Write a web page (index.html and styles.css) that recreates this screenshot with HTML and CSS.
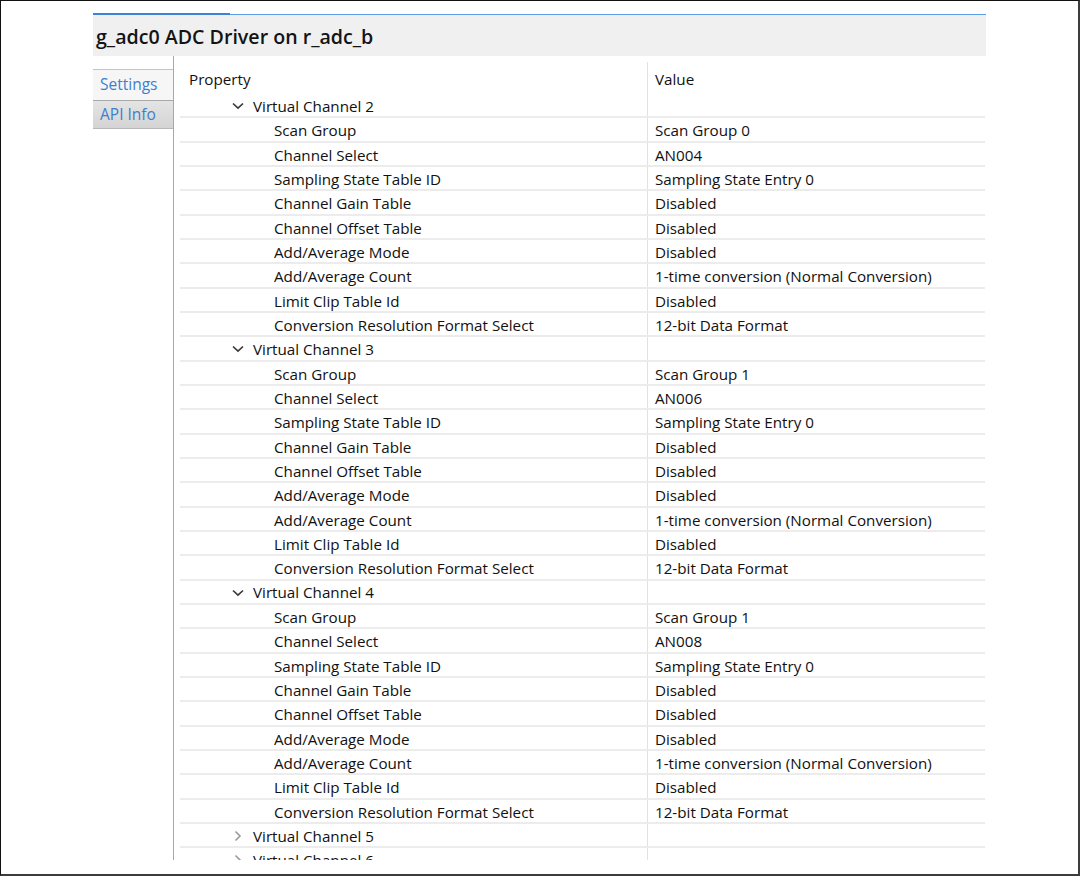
FILE: index.html
```html
<!DOCTYPE html>
<html>
<head>
<meta charset="utf-8">
<link rel="stylesheet" href="styles.css">
</head>
<body>
<div class="frame">
  <div class="editor">
    <div class="tabline"><div class="tabline-active"></div><div class="tabline-rest"></div></div>
    <div class="header"><span class="title">g_adc0 ADC Driver on r_adc_b</span></div>
    <div class="body">
      <div class="tabs">
        <div class="tab tab-selected">Settings</div>
        <div class="tab tab-other">API Info</div>
      </div>
      <div class="table-area">
        <div class="row head"><div class="prop">Property</div><div class="val">Value</div></div>

        <div class="row group"><div class="prop"><svg class="chev" width="12" height="8" viewBox="0 0 12 8"><path d="M1 1.5 L6 6.2 L11 1.5" fill="none" stroke="#3a3a3a" stroke-width="1.7"/></svg>Virtual Channel 2</div><div class="val"></div></div>
        <div class="row"><div class="prop child">Scan Group</div><div class="val">Scan Group 0</div></div>
        <div class="row"><div class="prop child">Channel Select</div><div class="val">AN004</div></div>
        <div class="row"><div class="prop child">Sampling State Table ID</div><div class="val">Sampling State Entry 0</div></div>
        <div class="row"><div class="prop child">Channel Gain Table</div><div class="val">Disabled</div></div>
        <div class="row"><div class="prop child">Channel Offset Table</div><div class="val">Disabled</div></div>
        <div class="row"><div class="prop child">Add/Average Mode</div><div class="val">Disabled</div></div>
        <div class="row"><div class="prop child">Add/Average Count</div><div class="val">1-time conversion (Normal Conversion)</div></div>
        <div class="row"><div class="prop child">Limit Clip Table Id</div><div class="val">Disabled</div></div>
        <div class="row"><div class="prop child">Conversion Resolution Format Select</div><div class="val">12-bit Data Format</div></div>

        <div class="row group"><div class="prop"><svg class="chev" width="12" height="8" viewBox="0 0 12 8"><path d="M1 1.5 L6 6.2 L11 1.5" fill="none" stroke="#3a3a3a" stroke-width="1.7"/></svg>Virtual Channel 3</div><div class="val"></div></div>
        <div class="row"><div class="prop child">Scan Group</div><div class="val">Scan Group 1</div></div>
        <div class="row"><div class="prop child">Channel Select</div><div class="val">AN006</div></div>
        <div class="row"><div class="prop child">Sampling State Table ID</div><div class="val">Sampling State Entry 0</div></div>
        <div class="row"><div class="prop child">Channel Gain Table</div><div class="val">Disabled</div></div>
        <div class="row"><div class="prop child">Channel Offset Table</div><div class="val">Disabled</div></div>
        <div class="row"><div class="prop child">Add/Average Mode</div><div class="val">Disabled</div></div>
        <div class="row"><div class="prop child">Add/Average Count</div><div class="val">1-time conversion (Normal Conversion)</div></div>
        <div class="row"><div class="prop child">Limit Clip Table Id</div><div class="val">Disabled</div></div>
        <div class="row"><div class="prop child">Conversion Resolution Format Select</div><div class="val">12-bit Data Format</div></div>

        <div class="row group"><div class="prop"><svg class="chev" width="12" height="8" viewBox="0 0 12 8"><path d="M1 1.5 L6 6.2 L11 1.5" fill="none" stroke="#3a3a3a" stroke-width="1.7"/></svg>Virtual Channel 4</div><div class="val"></div></div>
        <div class="row"><div class="prop child">Scan Group</div><div class="val">Scan Group 1</div></div>
        <div class="row"><div class="prop child">Channel Select</div><div class="val">AN008</div></div>
        <div class="row"><div class="prop child">Sampling State Table ID</div><div class="val">Sampling State Entry 0</div></div>
        <div class="row"><div class="prop child">Channel Gain Table</div><div class="val">Disabled</div></div>
        <div class="row"><div class="prop child">Channel Offset Table</div><div class="val">Disabled</div></div>
        <div class="row"><div class="prop child">Add/Average Mode</div><div class="val">Disabled</div></div>
        <div class="row"><div class="prop child">Add/Average Count</div><div class="val">1-time conversion (Normal Conversion)</div></div>
        <div class="row"><div class="prop child">Limit Clip Table Id</div><div class="val">Disabled</div></div>
        <div class="row"><div class="prop child">Conversion Resolution Format Select</div><div class="val">12-bit Data Format</div></div>

        <div class="row group"><div class="prop"><svg class="chev" width="12" height="12" viewBox="0 0 12 12"><path d="M3.5 1.5 L8 6 L3.5 10.5" fill="none" stroke="#9a9a9a" stroke-width="1.6"/></svg>Virtual Channel 5</div><div class="val"></div></div>
        <div class="row group"><div class="prop"><svg class="chev" width="12" height="12" viewBox="0 0 12 12"><path d="M3.5 1.5 L8 6 L3.5 10.5" fill="none" stroke="#9a9a9a" stroke-width="1.6"/></svg>Virtual Channel 6</div><div class="val"></div></div>
      </div>
    </div>
  </div>
</div>
</body>
</html>
```
FILE: styles.css
```css
html, body {
  margin: 0;
  padding: 0;
  background: #ffffff;
}

.frame {
  width: 1080px;
  height: 876px;
  box-sizing: border-box;
  border-top: 1px solid #111111;
  border-left: 1px solid #111111;
  border-right: 2px solid #3c3c3c;
  border-bottom: 2px solid #3c3c3c;
  background: #ffffff;
  overflow: hidden;
  font-family: "Open Sans", "Noto Sans", sans-serif;
  color: #111111;
}

.editor {
  margin-left: 92px;
  width: 893px;
  padding-top: 12px;
}

.tabline {
  display: flex;
  height: 2px;
}

.tabline-active {
  width: 137px;
  height: 2px;
  background: #3a84d6;
}

.tabline-rest {
  flex: 1;
  height: 1px;
  margin-top: 1px;
  background: #5c9ee3;
}

.header {
  height: 41px;
  background: #f0f0f0;
  box-sizing: border-box;
  padding-left: 3px;
  padding-top: 8px;
}

.title {
  font-size: 19.6px;
  font-weight: 600;
  color: #141414;
}

.body {
  display: flex;
  height: 804px;
  overflow: hidden;
}

.tabs {
  width: 80px;
  border-right: 1px solid #a8a8a8;
  padding-top: 13px;
  flex-shrink: 0;
}

.tab {
  box-sizing: border-box;
  padding-left: 7px;
  font-size: 15.5px;
  color: #3b7fd2;
}

.tab-selected {
  height: 31px;
  border-top: 1px solid #c4c4c4;
  background: #f6f6f6;
  line-height: 28px;
}

.tab-other {
  height: 29px;
  border-top: 1px solid #a8a8a8;
  border-bottom: 1px solid #b8b8b8;
  background: linear-gradient(#e4e4e4, #d4d4d4);
  line-height: 26px;
}

.table-area {
  margin-left: 6px;
  width: 805px;
  padding-top: 6px;
  font-size: 15.2px;
}

.row {
  display: flex;
  height: 24.33px;
  box-sizing: border-box;
  border-bottom: 2px solid #ececec;
  line-height: 25px;
}

.row.head {
  height: 32px;
  border-bottom: none;
}

.prop {
  width: 467px;
  flex-shrink: 0;
  padding-left: 9px;
  box-sizing: border-box;
  white-space: nowrap;
}

.group .prop {
  padding-left: 52px;
  display: flex;
  align-items: center;
  padding-top: 2px;
}

.prop.child {
  padding-left: 94px;
}

.chev {
  margin-right: 9px;
  flex-shrink: 0;
}

.val {
  flex: 1;
  border-left: 1px solid #e2e2e2;
  padding-left: 7px;
  white-space: nowrap;
}

.head .prop, .head .val {
  line-height: 34px;
}
```
